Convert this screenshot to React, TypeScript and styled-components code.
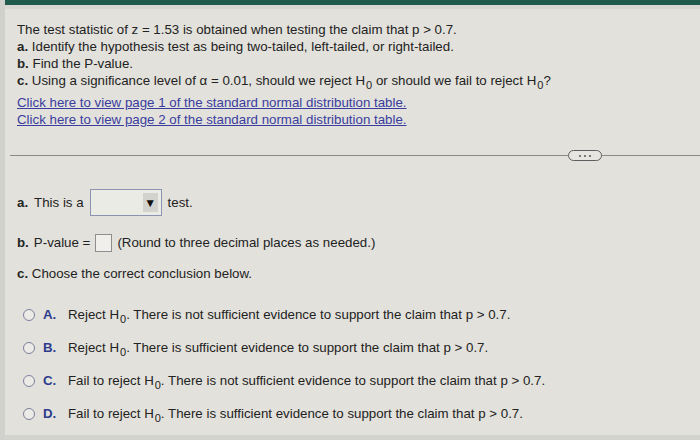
import React from 'react'
import styled, { createGlobalStyle } from 'styled-components'

const GlobalStyle = createGlobalStyle`
  html, body {
    margin: 0;
    padding: 0;
    background: #e2e1dc;
  }
`

const options = [
  { letter: 'A.', verdict: 'Reject', evidence: 'There is not sufficient evidence' },
  { letter: 'B.', verdict: 'Reject', evidence: 'There is sufficient evidence' },
  { letter: 'C.', verdict: 'Fail to reject', evidence: 'There is not sufficient evidence' },
  { letter: 'D.', verdict: 'Fail to reject', evidence: 'There is sufficient evidence' },
]

const H0 = (): JSX.Element => (
  <>
    H<Sub>0</Sub>
  </>
)

const App = (): JSX.Element => {
  return (
    <>
      <GlobalStyle />
      <Page>
        <TopBar />
        <Question>
          <Line>The test statistic of z = 1.53 is obtained when testing the claim that p &gt; 0.7.</Line>
          <Line><b>a.</b> Identify the hypothesis test as being two-tailed, left-tailed, or right-tailed.</Line>
          <Line><b>b.</b> Find the P-value.</Line>
          <Line>
            <b>c.</b> Using a significance level of α = 0.01, should we reject <H0 /> or should we fail to reject <H0 />?
          </Line>
          <Links>
            <Link>Click here to view page 1 of the standard normal distribution table.</Link>
            <Link>Click here to view page 2 of the standard normal distribution table.</Link>
          </Links>
        </Question>

        <Divider>
          <Rule />
          <MoreButton>
            <Dot />
            <Dot />
            <Dot />
          </MoreButton>
          <Rule $short />
        </Divider>

        <Answers>
          <PartA>
            <b>a.</b> This is a
            <Select>
              <SelectArrow>▼</SelectArrow>
            </Select>
            test.
          </PartA>
          <PartB>
            <b>b.</b> P-value =
            <AnswerBox />
            (Round to three decimal places as needed.)
          </PartB>
          <PartC>
            <b>c.</b> Choose the correct conclusion below.
          </PartC>
          <Choices>
            {options.map(o => (
              <Choice key={o.letter}>
                <Radio />
                <Letter>{o.letter}</Letter>
                <span>
                  {o.verdict} <H0 />. {o.evidence} to support the claim that p &gt; 0.7.
                </span>
              </Choice>
            ))}
          </Choices>
        </Answers>
        <BottomBand />
      </Page>
    </>
  )
}

export default App

// Styling
const Page = styled.div`
  box-sizing: border-box;
  width: 700px;
  height: 440px;
  overflow: hidden;
  display: flex;
  flex-direction: column;
  background: #e2e1dc;
  border-left: 5px solid #d0d0cc;
  font-family: 'Liberation Sans', Arial, sans-serif;
  font-size: 13.3px;
  color: #222;

  b {
    font-weight: bold;
    color: #262626;
  }
`

const TopBar = styled.div`
  flex: none;
  height: 5px;
  margin-left: -5px;
  background: #1f5a4b;
  border-bottom: 4px solid #d8d7d3;
`

const Question = styled.div`
  padding: 12px 0 0 12px;
`

const Line = styled.div`
  line-height: 17px;
  white-space: nowrap;
`

const Sub = styled.span`
  position: relative;
  top: 4px;
  font-size: 11px;
  line-height: 0;
  margin-left: 1px;
`

const Links = styled.div`
  margin-top: 5px;
  display: flex;
  flex-direction: column;
`

const Link = styled.a`
  color: #3a3d9e;
  text-decoration: underline;
  line-height: 17px;
  cursor: pointer;
`

const Divider = styled.div`
  margin-top: 22px;
  display: flex;
  align-items: center;
  padding-left: 5px;
`

const Rule = styled.div<{ $short?: boolean }>`
  flex: ${({ $short }) => ($short ? '0 0 98px' : '1')};
  height: 1px;
  background: #8a8a88;
`

const MoreButton = styled.div`
  flex: none;
  box-sizing: border-box;
  width: 34px;
  height: 11px;
  border: 1.5px solid #5e5e5e;
  border-radius: 6px;
  display: flex;
  align-items: center;
  justify-content: center;
  gap: 3px;
  background: #e6e5e1;
`

const Dot = styled.span`
  width: 2px;
  height: 2px;
  border-radius: 50%;
  background: #555;
`

const Answers = styled.div`
  flex: 1;
  padding: 28px 0 0 12px;
`

const PartA = styled.div`
  display: flex;
  align-items: center;
  gap: 6px;
  height: 27px;
`

const Select = styled.div`
  box-sizing: border-box;
  width: 72px;
  height: 27px;
  border: 1px solid #8d93b3;
  background: #ebebe6;
  display: flex;
  justify-content: flex-end;
  align-items: stretch;
  padding: 3px;
`

const SelectArrow = styled.div`
  width: 15px;
  background: #d2d2cf;
  display: flex;
  align-items: center;
  justify-content: center;
  font-size: 12px;
  color: #111;
`

const PartB = styled.div`
  margin-top: 18px;
  display: flex;
  align-items: center;
  gap: 5px;
  height: 17px;
`

const AnswerBox = styled.div`
  box-sizing: border-box;
  width: 17px;
  height: 18px;
  border: 1px solid #8e8e8e;
  background: #f0efeb;
`

const PartC = styled.div`
  margin-top: 14px;
  line-height: 17px;
`

const Choices = styled.div`
  margin-top: 24px;
  display: flex;
  flex-direction: column;
  gap: 16px;
  padding-left: 6px;
`

const Choice = styled.div`
  display: flex;
  align-items: center;
  height: 17px;
  white-space: nowrap;
`

const Radio = styled.span`
  box-sizing: border-box;
  width: 12px;
  height: 12px;
  border-radius: 50%;
  border: 1.5px solid #7c809c;
  background: #ecebe7;
  margin-right: 8px;
`

const Letter = styled.span`
  font-weight: bold;
  color: #2f3c8c;
  width: 25px;
`

const BottomBand = styled.div`
  flex: none;
  height: 5px;
  background: #d2d2ce;
`
